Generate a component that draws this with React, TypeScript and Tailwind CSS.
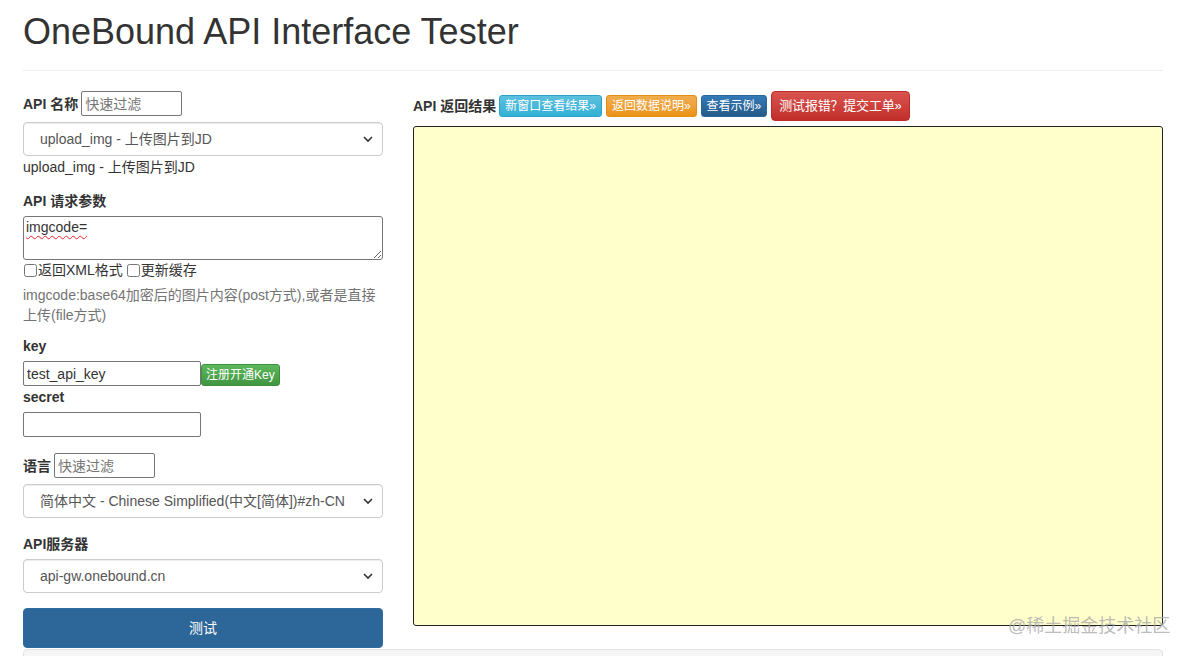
import React from "react";

const font = { fontFamily: '"Liberation Sans", "Noto Sans CJK SC", sans-serif' };

function Chevron() {
  return (
    <svg
      className="pointer-events-none absolute right-[10px] top-1/2 -translate-y-1/2"
      width="10"
      height="7"
      viewBox="0 0 10 7"
    >
      <path d="M1 1.5 L5 5.5 L9 1.5" fill="none" stroke="#333" strokeWidth="1.6" />
    </svg>
  );
}

function Select({ value }: { value: string }) {
  return (
    <div className="relative h-[34px] w-full">
      <select
        defaultValue={value}
        className="h-full w-full appearance-none rounded-[4px] border border-[#ccc] bg-white pl-[16px] text-[14px] text-[#555] shadow-[inset_0_1px_1px_rgba(0,0,0,0.075)] outline-none"
      >
        <option>{value}</option>
      </select>
      <Chevron />
    </div>
  );
}

function FilterInput() {
  return (
    <input
      placeholder="快速过滤"
      className="h-[25px] w-[101px] rounded-[2px] border border-[#767676] px-[3px] text-[14px] font-normal text-[#333] placeholder:text-[#757575] outline-none"
    />
  );
}

function Label({ children }: { children: React.ReactNode }) {
  return <div className="mb-[5px] text-[14px] font-bold leading-[20px] text-[#333]">{children}</div>;
}

export default function App() {
  return (
    <div style={font} className="relative h-[656px] w-[1188px] overflow-hidden bg-white text-[#333]">
      <div className="mx-[23px] w-[1140px]">
        <div className="border-b border-[#eee] pt-[12px] pb-[18px]">
          <h1 className="text-[36px] font-normal leading-[40px] text-[#333]">OneBound API Interface Tester</h1>
        </div>

        <div className="mt-[20px] flex gap-[30px]">
          {/* left column */}
          <div className="w-[360px] text-[14px]">
            <div className="flex items-center gap-[3px] leading-[20px]">
              <span className="font-bold">API 名称</span>
              <FilterInput />
            </div>
            <div className="mt-[6px]">
              <Select value="upload_img - 上传图片到JD" />
            </div>
            <div className="mt-[1px] leading-[20px]">upload_img - 上传图片到JD</div>

            <div className="mt-[14px]">
              <Label>API 请求参数</Label>
              <textarea
                defaultValue="imgcode="
                spellCheck={false}
                className="block h-[44px] w-full resize-y rounded-[3px] border border-[#767676] px-[2px] py-[1px] text-[14px] leading-[18px] text-[#333] underline decoration-wavy decoration-[#e23] decoration-[1px] underline-offset-[3px] outline-none"
              />
              <div className="flex items-center leading-[20px]">
                <input type="checkbox" className="m-0 ml-[1px] mr-[1px] h-[13px] w-[13px]" />
                <span>返回XML格式</span>
                <input type="checkbox" className="m-0 ml-[4px] mr-[1px] h-[13px] w-[13px]" />
                <span>更新缓存</span>
              </div>
              <div className="mt-[5px] mb-[11px] text-[14px] leading-[20px] text-[#737373]">
                imgcode:base64加密后的图片内容(post方式),或者是直接上传(file方式)
              </div>
            </div>

            <div>
              <Label>key</Label>
              <div className="flex items-end">
                <input
                  defaultValue="test_api_key"
                  className="h-[25px] w-[178px] rounded-[2px] border border-[#767676] px-[3px] text-[14px] text-[#333] outline-none"
                />
                <button className="h-[22px] rounded-[3px] border border-[#3e8f3e] bg-linear-to-b from-[#5cb85c] to-[#419641] px-[4px] text-[12px] leading-[20px] text-white">
                  注册开通Key
                </button>
              </div>
            </div>
            <div className="mt-[1px]">
              <Label>secret</Label>
              <input className="h-[25px] w-[178px] rounded-[2px] border border-[#767676] px-[3px] text-[14px] outline-none" />
            </div>

            <div className="mt-[16px]">
              <div className="flex items-center gap-[3px] leading-[20px]">
                <span className="font-bold">语言</span>
                <FilterInput />
              </div>
              <div className="mt-[6px]">
                <Select value="简体中文 - Chinese Simplified(中文[简体])#zh-CN" />
              </div>
            </div>

            <div className="mt-[16px]">
              <Label>API服务器</Label>
              <Select value="api-gw.onebound.cn" />
            </div>

            <button className="mt-[15px] h-[40px] w-full rounded-[4px] border border-[#2e6da4] bg-[#2d6699] text-[14px] text-white">
              测试
            </button>
          </div>

          {/* right column */}
          <div className="w-[750px]">
            <div className="flex h-[30px] items-center text-[14px]">
              <span className="mr-[3px] font-bold">API 返回结果</span>
              <button className="mr-[4px] h-[22px] rounded-[3px] border border-[#28a4c9] bg-linear-to-b from-[#5bc0de] to-[#31b0d5] px-[5px] text-[12px] leading-[20px] text-white">
                新窗口查看结果»
              </button>
              <button className="mr-[4px] h-[22px] rounded-[3px] border border-[#e38d13] bg-linear-to-b from-[#f0ad4e] to-[#eb9316] px-[5px] text-[12px] leading-[20px] text-white">
                返回数据说明»
              </button>
              <button className="mr-[4px] h-[22px] rounded-[3px] border border-[#2b669a] bg-linear-to-b from-[#337ab7] to-[#265a88] px-[5px] text-[12px] leading-[20px] text-white">
                查看示例»
              </button>
              <button className="h-[30px] rounded-[4px] border border-[#b92c28] bg-linear-to-b from-[#d9534f] to-[#c12e2a] px-[7px] text-[13px] tracking-[-0.2px] text-white">
                测试报错？提交工单»
              </button>
            </div>
            <div className="mt-[5px] h-[500px] w-full rounded-[3px] border border-[#222] bg-[#ffffcc]" />
          </div>
        </div>

        <div className="mt-[1px] h-[40px] w-full rounded-[4px] border border-[#e3e3e3] bg-[#f5f5f5]" />
      </div>

      <div className="absolute left-[1008px] top-[614px] text-[18px] leading-[24px] text-[#aaa]/80">@稀土掘金技术社区</div>
    </div>
  );
}
